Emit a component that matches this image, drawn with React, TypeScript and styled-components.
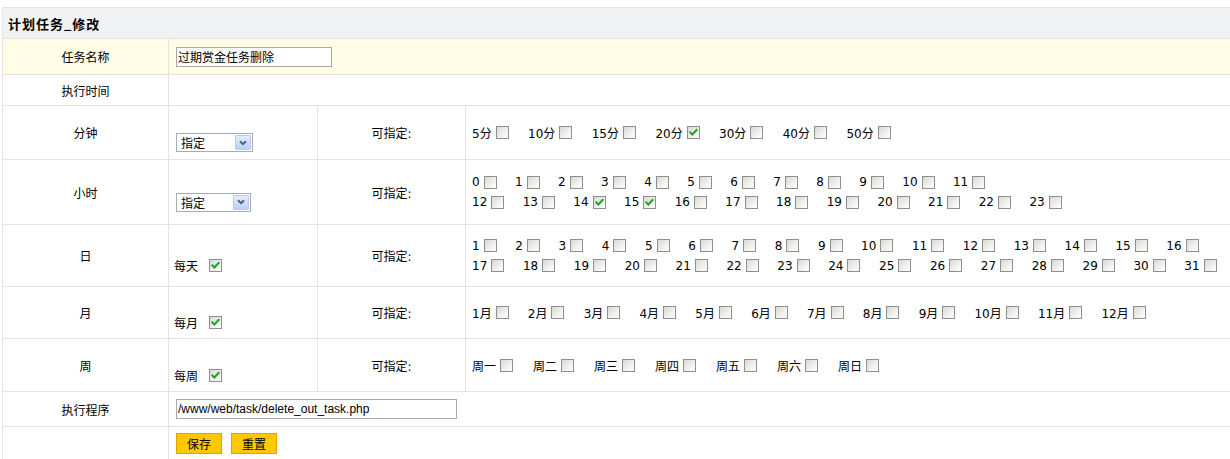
import React from 'react';
import styled, { createGlobalStyle } from 'styled-components';

const LINE = '#e3e3e3';
const CJK = `"Noto Sans CJK SC", sans-serif`;

const GlobalStyle = createGlobalStyle`
  html, body { margin: 0; padding: 0; background: #fff; overflow: hidden; }
  body { font: 12px "DejaVu Sans", "Noto Sans CJK SC", sans-serif; color: #000; }
`;

const Page = styled.div`
  width: 1230px;
  box-sizing: border-box;
  padding: 7px 0 0 2px;
  overflow: hidden;
`;

const Table = styled.div`
  width: 1229px;
  border-top: 1px solid ${LINE};
  border-left: 1px solid ${LINE};
`;

const Header = styled.div`
  height: 31px;
  box-sizing: border-box;
  border-bottom: 1px solid ${LINE};
  background: #f1f2f4;
  display: flex;
  align-items: center;
  padding-left: 5px;
  font-weight: bold;
  font-family: ${CJK};
  font-size: 13px;
  letter-spacing: 1px;
`;

const Row = styled.div<{ $h: number; $bg?: string }>`
  display: grid;
  grid-template-columns: 166px 149px 148px 1fr;
  height: ${(p) => p.$h}px;
  background: ${(p) => p.$bg ?? '#fff'};
`;

const BaseCell = styled.div`
  box-sizing: border-box;
  border-right: 1px solid ${LINE};
  border-bottom: 1px solid ${LINE};
  display: flex;
  align-items: center;
  min-width: 0;
`;

const LabelCell = styled(BaseCell)`
  justify-content: center;
  font-family: ${CJK};
`;

const HintCell = styled(BaseCell)`
  justify-content: center;
`;

const ControlCell = styled(BaseCell)<{ $lowered?: boolean }>`
  padding-left: 5px;
  padding-top: ${(p) => (p.$lowered ? 20 : 0)}px;
  font-family: ${CJK};
`;

const WideCell = styled(BaseCell)`
  grid-column: 2 / -1;
  padding-left: 5px;
`;

const ValueCell = styled(BaseCell)`
  flex-direction: column;
  justify-content: center;
  align-items: flex-start;
  padding-left: 6px;
`;

const OptionLine = styled.div<{ $gap: number }>`
  display: flex;
  align-items: center;
  height: 20px;
  gap: ${(p) => p.$gap}px;
  white-space: nowrap;
`;

const Option = styled.span`
  display: inline-flex;
  align-items: center;
`;

const Box = styled.span<{ $ml: number }>`
  width: 13px;
  height: 13px;
  box-sizing: border-box;
  border: 1px solid #8e8f8f;
  background: linear-gradient(135deg, #d8d8d3 0%, #efefec 55%, #ffffff 100%);
  display: inline-flex;
  align-items: center;
  justify-content: center;
  margin-left: ${(p) => p.$ml}px;
  flex: none;
`;

const Checkbox: React.FC<{ checked?: boolean; ml?: number }> = ({ checked, ml = 4 }) => (
  <Box $ml={ml} role="checkbox" aria-checked={!!checked}>
    {checked && (
      <svg width="11" height="11" viewBox="0 0 11 11">
        <polyline
          points="2.3,5.4 4.3,7.5 8.6,3"
          fill="none"
          stroke="#21a121"
          strokeWidth="2"
          strokeLinecap="square"
        />
      </svg>
    )}
  </Box>
);

const TextInput = styled.input<{ $w: number; $latin?: boolean }>`
  width: ${(p) => p.$w}px;
  height: 20px;
  box-sizing: border-box;
  border: 1px solid #a8a8a8;
  padding: 0 1px;
  margin: 0 0 0 2px;
  font-size: 12px;
  font-family: ${(p) => (p.$latin ? `"Liberation Sans", Arial, sans-serif` : CJK)};
  color: #000;
  background: #fff;
  outline: none;
`;

const Select = styled.div<{ $w: number }>`
  width: ${(p) => p.$w}px;
  height: 19px;
  box-sizing: border-box;
  margin-left: 2px;
  border: 1px solid #a5acb2;
  background: #fff;
  padding: 1px;
  display: flex;
  align-items: center;
  justify-content: space-between;
  font-family: ${CJK};
  font-size: 12px;
`;

const SelectText = styled.span`
  padding-left: 3px;
  line-height: 15px;
`;

const SelectArrow = styled.span`
  width: 16px;
  height: 15px;
  box-sizing: border-box;
  border: 1px solid #b9c9ef;
  border-radius: 1px;
  background: linear-gradient(#e4ecfd, #bed0f9);
  display: flex;
  align-items: center;
  justify-content: center;
`;

const FakeSelect: React.FC<{ w: number }> = ({ w }) => (
  <Select $w={w} role="combobox">
    <SelectText>指定</SelectText>
    <SelectArrow>
      <svg width="8" height="6" viewBox="0 0 8 6">
        <polyline points="1,1.2 4,4.2 7,1.2" fill="none" stroke="#4d6185" strokeWidth="2" />
      </svg>
    </SelectArrow>
  </Select>
);

const EveryLabel = styled.span`
  display: inline-flex;
  align-items: center;
`;

const ButtonBar = styled.div`
  display: flex;
  gap: 9px;
  margin-left: 2px;
`;

const Button = styled.button`
  width: 46px;
  height: 21px;
  box-sizing: border-box;
  padding: 0;
  background: #ffc800;
  border: 1px solid #e6a100;
  font-family: ${CJK};
  font-size: 12px;
  color: #000;
  cursor: pointer;
`;

type Opt = { label: string; checked?: boolean };

const Options: React.FC<{ lines: Opt[][]; gap: number }> = ({ lines, gap }) => (
  <>
    {lines.map((line, i) => (
      <OptionLine key={i} $gap={gap}>
        {line.map((o) => (
          <Option key={o.label}>
            <span>{o.label}</span>
            <Checkbox checked={o.checked} />
          </Option>
        ))}
      </OptionLine>
    ))}
  </>
);

const range = (a: number, b: number) => Array.from({ length: b - a + 1 }, (_, i) => a + i);

const minutes: Opt[] = [5, 10, 15, 20, 30, 40, 50].map((m) => ({ label: `${m}分`, checked: m === 20 }));
const hours: Opt[][] = [
  range(0, 11).map((h) => ({ label: `${h}` })),
  range(12, 23).map((h) => ({ label: `${h}`, checked: h === 14 || h === 15 })),
];
const days: Opt[][] = [range(1, 16).map((d) => ({ label: `${d}` })), range(17, 31).map((d) => ({ label: `${d}` }))];
const months: Opt[] = range(1, 12).map((m) => ({ label: `${m}月` }));
const weeks: Opt[] = ['周一', '周二', '周三', '周四', '周五', '周六', '周日'].map((w) => ({ label: w }));

export default function App() {
  return (
    <>
      <GlobalStyle />
      <Page>
        <Table>
          <Header>计划任务_修改</Header>

          <Row $h={36} $bg="#fffde6">
            <LabelCell>任务名称</LabelCell>
            <WideCell>
              <TextInput $w={156} readOnly value="过期赏金任务删除" />
            </WideCell>
          </Row>

          <Row $h={31}>
            <LabelCell>执行时间</LabelCell>
            <WideCell />
          </Row>

          <Row $h={54}>
            <LabelCell>分钟</LabelCell>
            <ControlCell $lowered>
              <FakeSelect w={77} />
            </ControlCell>
            <HintCell>可指定:</HintCell>
            <ValueCell>
              <Options lines={[minutes]} gap={19.4} />
            </ValueCell>
          </Row>

          <Row $h={65}>
            <LabelCell>小时</LabelCell>
            <ControlCell $lowered>
              <FakeSelect w={75} />
            </ControlCell>
            <HintCell>可指定:</HintCell>
            <ValueCell>
              <Options lines={hours} gap={18.4} />
            </ValueCell>
          </Row>

          <Row $h={62}>
            <LabelCell>日</LabelCell>
            <ControlCell $lowered>
              <EveryLabel>
                每天
                <Checkbox checked ml={11} />
              </EveryLabel>
            </ControlCell>
            <HintCell>可指定:</HintCell>
            <ValueCell>
              <Options lines={days} gap={18.6} />
            </ValueCell>
          </Row>

          <Row $h={52}>
            <LabelCell>月</LabelCell>
            <ControlCell $lowered>
              <EveryLabel>
                每月
                <Checkbox checked ml={11} />
              </EveryLabel>
            </ControlCell>
            <HintCell>可指定:</HintCell>
            <ValueCell>
              <Options lines={[months]} gap={19.2} />
            </ValueCell>
          </Row>

          <Row $h={53}>
            <LabelCell>周</LabelCell>
            <ControlCell $lowered>
              <EveryLabel>
                每周
                <Checkbox checked ml={11} />
              </EveryLabel>
            </ControlCell>
            <HintCell>可指定:</HintCell>
            <ValueCell>
              <Options lines={[weeks]} gap={20} />
            </ValueCell>
          </Row>

          <Row $h={35}>
            <LabelCell>执行程序</LabelCell>
            <WideCell>
              <TextInput $w={281} $latin readOnly value="/www/web/task/delete_out_task.php" />
            </WideCell>
          </Row>

          <Row $h={34}>
            <LabelCell />
            <WideCell>
              <ButtonBar>
                <Button type="button">保存</Button>
                <Button type="button">重置</Button>
              </ButtonBar>
            </WideCell>
          </Row>
        </Table>
      </Page>
    </>
  );
}
